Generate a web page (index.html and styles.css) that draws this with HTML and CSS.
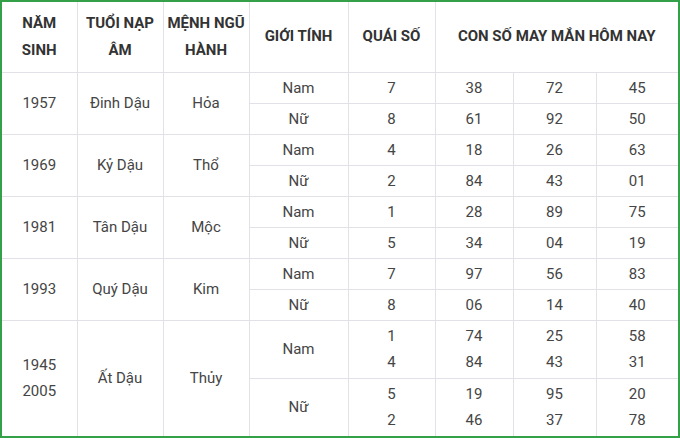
FILE: index.html
```html
<!DOCTYPE html>
<html lang="vi">
<head>
<meta charset="utf-8">
<link rel="stylesheet" href="styles.css">
</head>
<body>
<div class="frame">
<table class="luck">
  <colgroup>
    <col class="c1"><col class="c2"><col class="c3"><col class="c4"><col class="c5"><col class="c6"><col class="c7"><col class="c8">
  </colgroup>
  <thead>
    <tr class="head">
      <th>NĂM<br>SINH</th>
      <th>TUỔI NẠP<br>ÂM</th>
      <th>MỆNH NGŨ<br>HÀNH</th>
      <th>GIỚI TÍNH</th>
      <th>QUÁI SỐ</th>
      <th colspan="3">CON SỐ MAY MẮN HÔM NAY</th>
    </tr>
  </thead>
  <tbody>
    <tr><td rowspan="2">1957</td><td rowspan="2">Đinh Dậu</td><td rowspan="2">Hỏa</td><td>Nam</td><td>7</td><td>38</td><td>72</td><td>45</td></tr>
    <tr><td>Nữ</td><td>8</td><td>61</td><td>92</td><td>50</td></tr>
    <tr><td rowspan="2">1969</td><td rowspan="2">Kỷ Dậu</td><td rowspan="2">Thổ</td><td>Nam</td><td>4</td><td>18</td><td>26</td><td>63</td></tr>
    <tr><td>Nữ</td><td>2</td><td>84</td><td>43</td><td>01</td></tr>
    <tr><td rowspan="2">1981</td><td rowspan="2">Tân Dậu</td><td rowspan="2">Mộc</td><td>Nam</td><td>1</td><td>28</td><td>89</td><td>75</td></tr>
    <tr><td>Nữ</td><td>5</td><td>34</td><td>04</td><td>19</td></tr>
    <tr><td rowspan="2">1993</td><td rowspan="2">Quý Dậu</td><td rowspan="2">Kim</td><td>Nam</td><td>7</td><td>97</td><td>56</td><td>83</td></tr>
    <tr><td>Nữ</td><td>8</td><td>06</td><td>14</td><td>40</td></tr>
    <tr class="tall"><td rowspan="2" class="pair">1945<br>2005</td><td rowspan="2">Ất Dậu</td><td rowspan="2">Thủy</td><td>Nam</td><td class="pair">1<br>4</td><td class="pair">74<br>84</td><td class="pair">25<br>43</td><td class="pair">58<br>31</td></tr>
    <tr class="tall"><td>Nữ</td><td class="pair">5<br>2</td><td class="pair">19<br>46</td><td class="pair">95<br>37</td><td class="pair">20<br>78</td></tr>
  </tbody>
</table>
</div>
</body>
</html>
```
FILE: styles.css
```css
html, body {
  margin: 0;
  padding: 0;
  background: #ffffff;
}

.frame {
  box-sizing: border-box;
  width: 680px;
  height: 438px;
  border: 2px solid #34a047;
  overflow: hidden;
}

.luck {
  width: 676px;
  border-collapse: collapse;
  border-style: hidden;
  table-layout: fixed;
  font-family: Roboto, "Liberation Sans", Arial, sans-serif;
  font-size: 15px;
  color: #454545;
}

.c1 { width: 75px; }
.c2 { width: 86px; }
.c3 { width: 86px; }
.c4 { width: 99px; }
.c5 { width: 87px; }
.c6 { width: 78px; }
.c7 { width: 83px; }
.c8 { width: 82px; }

.luck th,
.luck td {
  border: 1px solid #e3e0e7;
  padding: 0;
  text-align: center;
  vertical-align: middle;
}

.luck th {
  font-weight: 700;
  color: #333333;
  line-height: 27px;
}

.luck td {
  line-height: 20px;
}

.head { height: 70px; }

.luck tbody tr { height: 31px; }

.luck tbody tr.tall { height: 58px; }

.luck td.pair { line-height: 26px; }
```
